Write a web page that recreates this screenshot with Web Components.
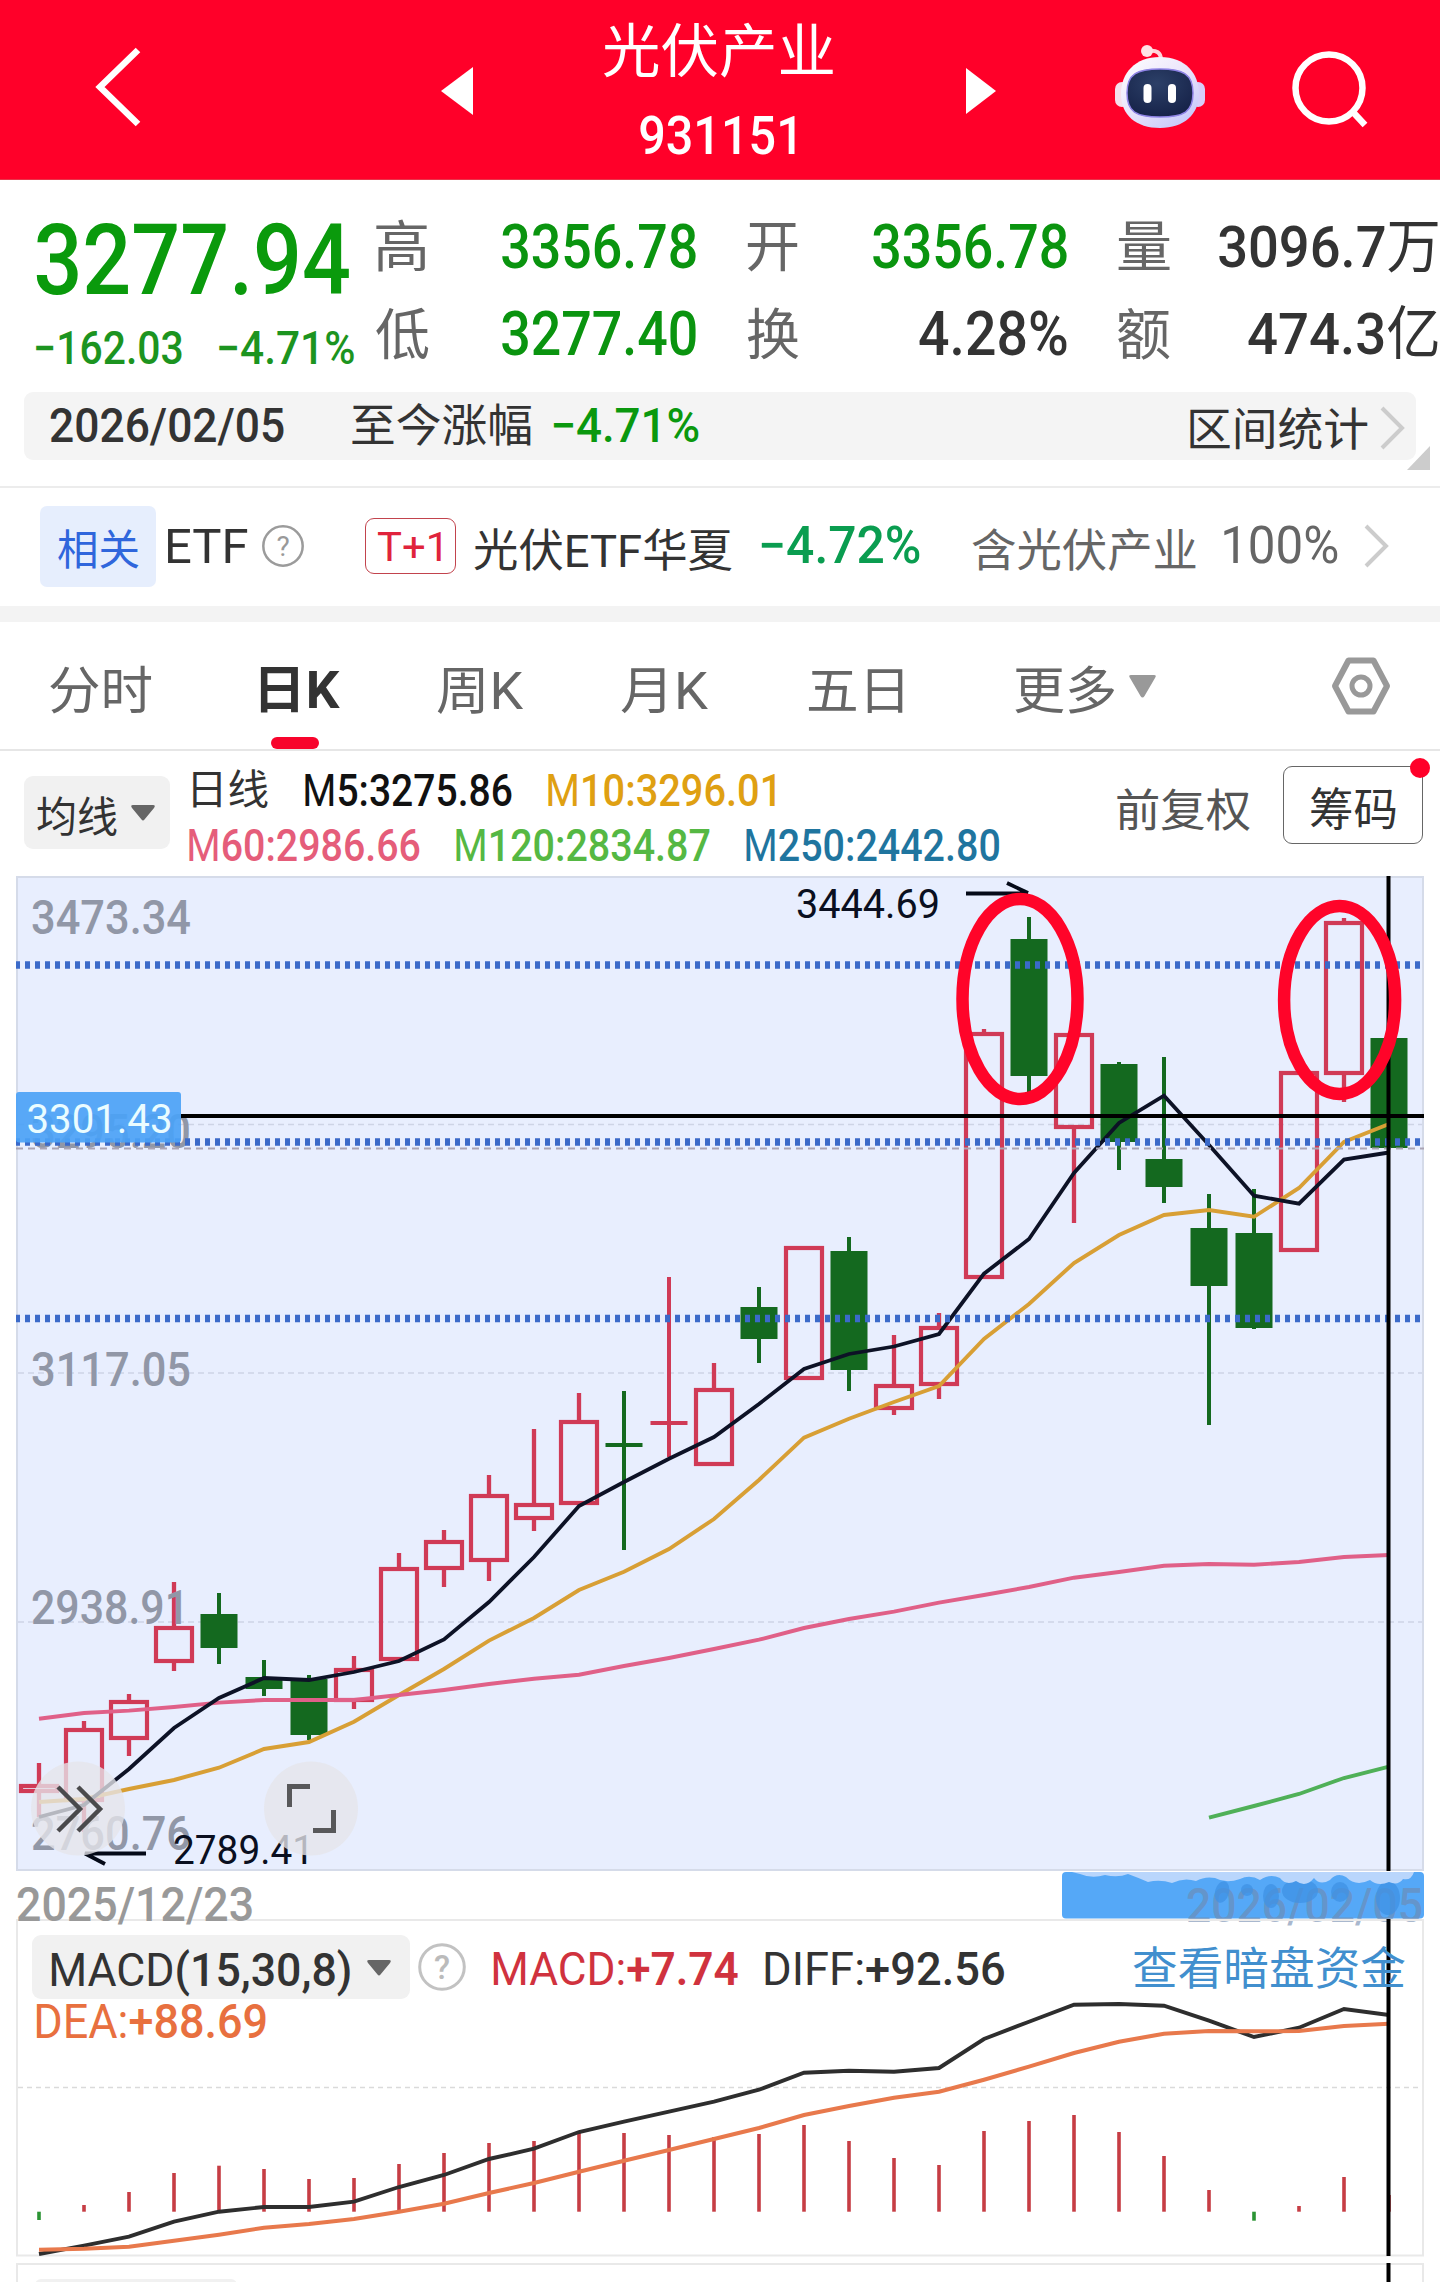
<!DOCTYPE html>
<html lang="zh-CN">
<head>
<meta charset="utf-8">
<title>光伏产业 931151</title>
<style>
html,body{margin:0;padding:0;background:#fff}
body{width:1440px;height:2282px;overflow:hidden;font-family:Roboto,"Noto Sans CJK SC",sans-serif;color:#333}
</style>
</head>
<body>
<stock-page></stock-page>
<script>
const STACK = 'Roboto, "Noto Sans CJK SC", sans-serif';

function define(name, css, html) {
  customElements.define(name, class extends HTMLElement {
    connectedCallback() {
      if (this.shadowRoot) return;
      const root = this.attachShadow({ mode: 'open' });
      root.innerHTML = `<style>${css}</style>${typeof html === 'function' ? html(this) : html}`;
    }
  });
}

/* A single line of text condensed to a given ink width.
   w: ink width, s: font size, wt: weight, g: gap before, y: centre inside the row. <b> marks heavier digits. */
customElements.define('fit-text', class extends HTMLElement {
  connectedCallback() {
    if (this.shadowRoot) return;
    const n = (k, d) => this.hasAttribute(k) ? +this.getAttribute(k) : d;
    const w = n('w', 100), s = n('s', 45), wt = n('wt', 400), bw = n('bw', 500), g = n('g', 0), y = n('y', s / 2);
    const ctx = document.createElement('canvas').getContext('2d');
    let adv = 0, left = 0, right = 0, i = 0;
    for (const node of this.childNodes) {
      ctx.font = `${node.nodeType === 1 ? bw : wt} ${s}px ${STACK}`;
      const m = ctx.measureText(node.textContent);
      if (i++ === 0) left = m.actualBoundingBoxLeft;
      right = adv + m.actualBoundingBoxRight;
      adv += m.width;
    }
    const k = w / (left + right);
    this.attachShadow({ mode: 'open' }).innerHTML = `<style>
      :host{display:block;flex:none;width:${w}px;height:${s}px;margin-left:${g}px;margin-top:${y - s / 2}px;
        font:${wt} ${s}px/${s}px ${STACK};white-space:nowrap;color:${this.getAttribute('c') || 'inherit'}}
      span{display:inline-block;transform-origin:0 0;transform:translateX(${left * k}px) scaleX(${k})}
      ::slotted(b){font-weight:${bw}}
    </style><span><slot></slot></span>`;
  }
});

const ICONS = {
  back: [44, 80, '<path d="M42 3 4 40 42 77" fill="none" stroke="#fff" stroke-width="6.500"/>'],
  prev: [32, 48, '<path d="M0 24 32 0V48Z" fill="#fff"/>'],
  next: [30, 46, '<path d="M30 23 0 0V46Z" fill="#fff"/>'],
  robot: [92, 86, `<defs><linearGradient id="h" x1="0" y1="0" x2=".8" y2="1"><stop offset="0" stop-color="#fff"/><stop offset=".55" stop-color="#e9e3fb"/><stop offset="1" stop-color="#c5c8fa"/></linearGradient>
    <radialGradient id="f" cx=".45" cy=".3" r=".8"><stop offset="0" stop-color="#2c4068"/><stop offset="1" stop-color="#141f45"/></radialGradient></defs>
    <path d="M34 8Q47 6 47 17" fill="none" stroke="#ffd5dc" stroke-width="4"/><circle cx="33" cy="8" r="6" fill="#ffe3e6"/>
    <rect x="1" y="39" width="14" height="25" rx="7" fill="#f5dfec"/><rect x="77" y="39" width="14" height="25" rx="7" fill="#d8cefa"/>
    <path d="M46 14C72 14 85 31 85 51S70 85 46 85 7 72 7 51 21 14 46 14Z" fill="url(#h)"/>
    <path d="M46 26C69 26 79 31 79 50S70 74 46 74 13 69 13 50 23 26 46 26Z" fill="url(#f)" stroke="#8f83e6" stroke-width="1.500"/>
    <rect x="29.500" y="41" width="8" height="19" rx="4" fill="#fff"/><rect x="54" y="41" width="8" height="19" rx="4" fill="#fff"/>`],
  search: [76, 78, '<g fill="none" stroke="#fff" stroke-width="6.500"><ellipse cx="37" cy="38" rx="33.500" ry="33.500"/><path d="M60 61 73 75"/></g>'],
  chev: [26, 44, '<path d="M2 2 22 22 2 42" fill="none" stroke="#ccc" stroke-width="4"/>'],
  help: [44, 44, '<circle cx="22" cy="22" r="19.700" fill="none" stroke="#9b9b9b" stroke-width="2.500"/><text x="22" y="32" text-anchor="middle" font-size="28" fill="#999">?</text>'],
  help2: [50, 50, '<circle cx="25" cy="25" r="22.300" fill="none" stroke="#c2c2c2" stroke-width="3"/><text x="25" y="36.500" text-anchor="middle" font-size="33" font-weight="500" fill="#bbb">?</text>'],
  hex: [60, 60, '<path d="M17.500 4.500H42.500L56 30 42.500 55.500H17.500L4 30Z" fill="none" stroke="#999" stroke-width="6" stroke-linejoin="round"/><circle cx="30" cy="30" r="9" fill="none" stroke="#999" stroke-width="5"/>'],
  more: [27, 23, '<path d="M2 0H25Q28 0 26 3L15.500 21Q13.500 24 11.500 21L1 3Q-1 0 2 0Z" fill="#999"/>'],
  caret: [24, 16, '<path d="M2 0H22Q25 0 23 3L13.500 14.500Q12 16.500 10.500 14.500L1 3Q-1 0 2 0Z" fill="#666"/>'],
  corner: [23, 24, '<path d="M23 0V24H0Z" fill="#ccc"/>']
};
customElements.define('app-icon', class extends HTMLElement {
  connectedCallback() {
    if (this.shadowRoot) return;
    const [w, h, body] = ICONS[this.getAttribute('name')];
    const g = +this.getAttribute('g') || 0, y = +this.getAttribute('y') || h / 2;
    this.attachShadow({ mode: 'open' }).innerHTML = `<style>:host{display:block;flex:none;width:${w}px;height:${h}px;margin-left:${g}px;margin-top:${y - h / 2}px}
      svg{display:block;overflow:visible;font-family:${STACK}}</style><svg width="${w}" height="${h}" viewBox="0 0 ${w} ${h}">${body}</svg>`;
  }
});

define('title-bar', `
  :host{display:flex;align-items:flex-start;height:179px;background:#ff0029;color:#fff;border-bottom:1px solid #e8354a;box-sizing:content-box}
  .t{display:flex;flex-direction:column;width:230px;margin-left:130px}
`, `<app-icon name="back" g="96" y="87"></app-icon>
  <app-icon name="prev" g="301" y="90.5"></app-icon>
  <div class="t"><fit-text w="230" s="58" y="52">光伏产业</fit-text><fit-text w="155" s="54" wt="500" g="37" y="55">931151</fit-text></div>
  <app-icon name="next" g="133" y="90.5"></app-icon>
  <app-icon name="robot" g="118" y="86"></app-icon>
  <app-icon name="search" g="86" y="89"></app-icon>`);

define('stat-pair', `
  :host{display:flex;justify-content:space-between;align-items:flex-start;height:87px;color:#333}
`, '<slot></slot>');

define('quote-panel', `
  :host{display:flex;height:212px}
  .main{width:376px;flex:none;color:#0a9a0c}
  .row{display:flex;align-items:flex-start}
  .col{width:320px;flex:none;padding-top:22px}
  .col+.col{margin-left:51px}
`, `<div class="main"><fit-text w="313" s="99" wt="500" g="36" y="80">3277.94</fit-text>
    <div class="row"><fit-text w="146" s="45.5" wt="500" g="36" y="39" c="#1c9420">−162.03</fit-text><fit-text w="135" s="45.5" wt="500" g="37" y="39" c="#1c9420">−4.71%</fit-text></div></div>
  <div class="col">
    <stat-pair><fit-text w="51" s="55" y="45" c="#666">高</fit-text><fit-text w="194" s="61" wt="500" y="45" c="#0a940f">3356.78</fit-text></stat-pair>
    <stat-pair><fit-text w="53" s="55" y="46" c="#666">低</fit-text><fit-text w="194" s="61" wt="500" y="45" c="#0a940f">3277.40</fit-text></stat-pair></div>
  <div class="col">
    <stat-pair><fit-text w="51" s="55" y="45" c="#666">开</fit-text><fit-text w="194" s="61" wt="500" y="45" c="#0a940f">3356.78</fit-text></stat-pair>
    <stat-pair><fit-text w="52" s="55" y="46" c="#666">换</fit-text><fit-text w="148" s="61" wt="500" y="45">4.28%</fit-text></stat-pair></div>
  <div class="col">
    <stat-pair><fit-text w="52" s="55" y="45" c="#666">量</fit-text><fit-text w="219" s="58" wt="400" bw="500" y="45"><b>3096.7</b>万</fit-text></stat-pair>
    <stat-pair><fit-text w="52" s="55" y="46" c="#666">额</fit-text><fit-text w="190" s="58" wt="400" bw="500" y="45"><b>474.3</b>亿</fit-text></stat-pair></div>`);

define('range-bar', `
  :host{display:block;height:94px;border-bottom:2px solid #ececec;box-sizing:content-box}
  .wrap{display:flex;align-items:flex-start}
  .bar{display:flex;align-items:flex-start;width:1392px;height:68px;margin-left:24px;background:#f4f4f4;border-radius:9px}
`, `<div class="wrap"><div class="bar"><fit-text w="234" s="48" wt="500" g="26" y="34">2026/02/05</fit-text>
  <fit-text w="179" s="45" g="68" y="34">至今涨幅</fit-text><fit-text w="146" s="48" wt="500" g="22" y="34" c="#0a980e">−4.71%</fit-text>
  <fit-text w="178" s="45" g="491" y="38">区间统计</fit-text><app-icon name="chev" g="12" y="36"></app-icon></div><app-icon name="corner" g="-9" y="66"></app-icon></div>`);

define('etf-row', `
  :host{display:flex;align-items:flex-start;height:118px;border-bottom:16px solid #f3f3f3;box-sizing:content-box}
  .chip{display:flex;align-items:flex-start;width:116px;height:81px;margin:18px 0 0 40px;background:#e6eefd;border-radius:7px}
  .tag{display:flex;align-items:flex-start;box-sizing:border-box;width:91px;height:56px;margin:30px 0 0 60px;border:1.500px solid #c2434d;border-radius:9px}
`, `<div class="chip"><fit-text w="81" s="42" g="18" y="45" c="#2f66dc">相关</fit-text></div>
  <fit-text w="81" s="48" g="11" y="59">ETF</fit-text><app-icon name="help" g="13" y="58"></app-icon>
  <div class="tag"><fit-text w="63" s="41" g="12" y="28" c="#e0233c">T+1</fit-text></div>
  <fit-text w="258" s="45" g="18" y="63">光伏ETF华夏</fit-text>
  <fit-text w="159" s="51" wt="500" g="29" y="57" c="#0a9d50">−4.72%</fit-text>
  <fit-text w="224" s="45" g="52" y="63" c="#666">含光伏产业</fit-text>
  <fit-text w="114" s="51" g="28" y="57" c="#666">100%</fit-text>
  <app-icon name="chev" g="26" y="58"></app-icon>`);

define('period-tabs', `
  :host{display:flex;align-items:flex-start;height:127px;color:#666;border-bottom:2px solid #e6e6e6;box-sizing:content-box}
  .on{display:flex;flex-direction:column;width:80px;height:127px;margin-left:108px;color:#333}
  .on i{width:48px;height:12px;border-radius:6px;background:#f8042c;margin:21px 0 0 11px}
`, `<fit-text w="102" s="51" g="50" y="69">分时</fit-text>
  <div class="on"><fit-text w="80" s="51" wt="700" y="68">日K</fit-text><i></i></div>
  <fit-text w="86" s="51" g="97" y="69">周K</fit-text><fit-text w="87" s="51" g="98" y="69">月K</fit-text>
  <fit-text w="95" s="51" g="100" y="69">五日</fit-text><fit-text w="100" s="51" g="112" y="69">更多</fit-text>
  <app-icon name="more" g="14" y="64"></app-icon><app-icon name="hex" g="175" y="64"></app-icon>`);

define('ma-legend', `
  :host{display:flex;align-items:flex-start;height:125px}
  .row{display:flex;align-items:flex-start;height:56px}
  .btn{display:flex;align-items:flex-start;width:146px;height:73px;margin:25px 0 0 24px;background:#f1f1f1;border-radius:9px}
  .ma{width:830px;flex:none;margin-left:19px}
  .box{display:flex;align-items:flex-start;position:relative;box-sizing:border-box;width:140px;height:78px;margin:15px 0 0 33px;border:1.500px solid #666;border-radius:9px}
  .box i{position:absolute;right:-8px;top:-9px;width:20px;height:20px;border-radius:50%;background:#ff0029}
`, `<div class="btn"><fit-text w="80" s="42" g="13" y="42">均线</fit-text><app-icon name="caret" g="14" y="37"></app-icon></div>
  <div class="ma"><div class="row"><fit-text w="75" s="41" g="4" y="39">日线</fit-text><fit-text w="207" s="44" g="37" y="40" c="#111">M<b>5:3275.86</b></fit-text><fit-text w="227" s="44" g="36" y="40" c="#dfa012">M<b>10:3296.01</b></fit-text></div>
  <div class="row"><fit-text w="231" s="44" g="0" y="39" c="#e55d7a">M<b>60:2986.66</b></fit-text><fit-text w="254" s="44" g="36" y="39" c="#55b843">M<b>120:2834.87</b></fit-text><fit-text w="253" s="44" g="36" y="39" c="#1f759f">M<b>250:2442.80</b></fit-text></div></div>
  <fit-text w="133" s="45" g="98" y="60" c="#555">前复权</fit-text>
  <div class="box"><fit-text w="86" s="45" g="26" y="43">筹码</fit-text><i></i></div>`);

const X = i => 39 + 45 * i;
const poly = (ys, from, color, width) => `<polyline fill="none" stroke="${color}" stroke-width="${width}" points="${ys.map((y, i) => X(i + from) + ',' + y).join(' ')}"/>`;
const label = (x, y, size, w, t, fill, wt = 400) => `<text x="${x}" y="${y}" font-size="${size}" font-weight="${wt}" fill="${fill}" textLength="${w}" lengthAdjust="spacingAndGlyphs">${t}</text>`;

/* direction, high, body top, body bottom, low */
const CANDLES = [
  'r 1763 1784 1793 1817','r 1721 1728 1802 1832','r 1694 1700 1740 1756','r 1582 1626 1663 1671','g 1593 1614 1648 1664',
  'g 1660 1677 1689 1696','g 1675 1679 1735 1740','r 1656 1668 1702 1709','r 1553 1567 1661 1661','r 1530 1540 1570 1587',
  'r 1475 1494 1562 1581','r 1429 1503 1520 1531','r 1393 1420 1505 1505','g 1391 1443 1447 1550','r 1277 1421 1425 1457',
  'r 1363 1388 1466 1466','g 1287 1307 1339 1363','r 1247 1246 1380 1380','g 1237 1251 1370 1391','r 1335 1384 1410 1415',
  'r 1313 1326 1386 1399','r 1029 1032 1279 1279','g 917 939 1076 1092','r 1033 1033 1129 1223','g 1062 1064 1142 1170',
  'g 1057 1159 1187 1203','g 1194 1228 1286 1425','g 1189 1233 1328 1329','r 1071 1071 1252 1252','r 918 921 1075 1102','g 1038 1038 1148 1148'
].map(s => s.split(' ').map((v, k) => k ? +v : v));
const MA5 = [1817,1805,1769,1728,1698,1678,1680,1672,1661,1639.5,1602,1557,1506,1482,1458.7,1437,1404,1369,1354,1346.5,1334,1273.7,1239,1173,1123,1095.7,1145,1195.7,1203.6,1159.6,1152.5];
const MA10 = [1802,1799,1789,1780,1767.7,1749,1742,1721.7,1695,1669,1640.6,1618,1590,1571.7,1549,1519,1480,1437.7,1418.7,1402,1386,1339,1304,1263,1235,1215,1210,1216.8,1188,1142,1124];
const MA60 = [1718.7,1713,1710.6,1707,1702.6,1700,1700,1700,1695,1690,1684,1678.7,1674.7,1666,1658,1649,1639.7,1628,1619,1611.7,1602.7,1595,1587,1577.7,1572,1565.7,1564,1564.7,1562,1557,1555];
const MA120 = [1817.7,1806,1794,1778,1766.7];

define('k-chart', `:host{display:block;height:995px;margin-left:16px}svg{display:block;font-family:${STACK}}`, () => {
  const candles = CANDLES.map(([d, h, t, b, l], i) => {
    const x = X(i), c = d === 'r' ? '#d03a56' : '#14691f', flat = b - t < 5;
    if (flat) return `<path d="M${x} ${h}V${l}M${x - 18.5} ${(t + b) / 2}H${x + 18.5}" stroke="${c}" stroke-width="4"/>`;
    if (d === 'g') return `<path d="M${x} ${h}V${l}" stroke="${c}" stroke-width="4"/><rect x="${x - 18.5}" y="${t}" width="37" height="${b - t}" fill="${c}"/>`;
    return `<path d="M${x} ${h}V${t + 2}M${x} ${b - 2}V${Math.max(l, b - 2)}" stroke="${c}" stroke-width="4.300"/><rect x="${x - 18}" y="${t + 2}" width="36" height="${b - t - 4}" fill="none" stroke="${c}" stroke-width="4.200"/>`;
  }).join('');
  const dots = y => `<path d="M15 ${y}H1424" stroke="#3b6ac9" stroke-width="7.500" stroke-dasharray="5 5"/>`;
  const grid = y => `<path d="M18 ${y}H1422" stroke="#cdd4e6" stroke-width="1.500" stroke-dasharray="6 4"/>`;
  return `<svg width="1408" height="995" viewBox="16 876 1408 995">
    <rect x="17" y="877" width="1406" height="993" fill="#e8eefe" stroke="#d5dbe9" stroke-width="2"/>
    ${grid(1124.5)}${grid(1373)}${grid(1622)}
    ${candles}
    ${label(31, 934, 48, 160, '3473.34', '#9197a7', 500)}${label(31, 1148, 48, 160, '3295.20', '#9197a7', 500)}
    ${label(31, 1385.5, 48, 160, '3117.05', '#9197a7', 500)}${label(31, 1624, 48, 158, '2938.91', '#9197a7', 500)}${label(31, 1850, 48, 160, '2760.76', '#9197a7', 500)}
    ${poly(MA10, 0, '#d89f35', 3.9)}${poly(MA60, 0, '#e06088', 3.9)}${poly(MA5, 0, '#0d1226', 3.8)}${poly(MA120, 26, '#4fb058', 3.9)}
    ${label(796, 917.5, 40, 144, '3444.69', '#0a0f20')}<path d="M966 893.500H1028M1007 883 1028 893" stroke="#050a18" stroke-width="3.800" fill="none"/>
    ${label(173, 1863.5, 40, 141, '2789.41', '#0a0f20')}<path d="M146 1853.500H85L105 1864" stroke="#050a18" stroke-width="3.800" fill="none"/>
    <path d="M16 1148.500H1424" stroke="#aaa4b4" stroke-width="2" stroke-dasharray="7 5"/>
    <path d="M181 1116H1424" stroke="#000" stroke-width="4"/>
    ${dots(965)}${dots(1142)}${dots(1318.5)}
    <path d="M1388.500 876V1871" stroke="#000" stroke-width="4"/>
    <rect x="16" y="1092" width="165" height="50.500" rx="3" fill="#4ba2f6" fill-opacity=".92"/>
    ${label(26.5, 1132.5, 41, 146, '3301.43', '#eafcff')}
    <g fill="none" stroke="#ff0429" stroke-width="12.500"><ellipse cx="1020" cy="999" rx="57.500" ry="100"/><ellipse cx="1339.600" cy="1000" rx="55.500" ry="94"/></g>
    <g fill="#e6e6ea" fill-opacity=".78"><circle cx="78" cy="1808.500" r="47"/><circle cx="311" cy="1808.500" r="47"/></g>
    <g fill="none" stroke="#4a4a4c" stroke-width="4.500"><path d="M58 1787 80 1809 58 1831M78 1787 100 1809 78 1831"/><path d="M289.500 1807V1786.500H310M333.500 1810V1830.500H313" stroke-width="5" stroke="#58585a"/></g>
  </svg>`;
});

define('date-row', `
  :host{display:flex;justify-content:space-between;align-items:flex-start;height:48px;padding:0 16px;box-sizing:border-box}
  svg{display:block;overflow:visible;font-family:${STACK}}
  fit-text{position:relative;z-index:1}
`, `<fit-text w="235" s="48" wt="500" g="1" y="33.5" c="#999">2025/12/23</fit-text>
  <svg width="362" height="48" viewBox="1062 1871 362 48">
    <rect x="1062" y="1872" width="362" height="46.500" rx="4" fill="#55a8f7"/>
    <text x="1186" y="1921.500" font-size="48" font-weight="500" fill="#6f88ad" fill-opacity=".6" textLength="237" lengthAdjust="spacingAndGlyphs">2026/02/05</text>
    <g fill="#3f92e4" fill-opacity=".75"><ellipse cx="1222" cy="1892" rx="7" ry="11" transform="rotate(15 1222 1892)"/><circle cx="1247" cy="1890" r="6"/><ellipse cx="1271" cy="1896" rx="8" ry="12"/><ellipse cx="1300" cy="1891" rx="18" ry="12"/><ellipse cx="1340" cy="1892" rx="9" ry="10"/><ellipse cx="1388" cy="1898" rx="12" ry="17"/></g>
    <path d="M1072 1872H1414Q1411 1881 1403 1879 1398 1886 1389 1882 1378 1887 1370 1880 1356 1887 1346 1877 1337 1872 1330 1880 1320 1886 1314 1878 1306 1888 1296 1881 1286 1886 1280 1878 1270 1873 1260 1880 1250 1874 1240 1879 1226 1884 1215 1878 1205 1876 1196 1881 1184 1877 1172 1883 1160 1879 1148 1882 1139 1878 1128 1874 1118 1878 1105 1875 1092 1879 1080 1874 1074 1879Z" fill="#b9d6fc"/>
  </svg>`);

const HIST = [2220,2205,2192,2173,2165.7,2169,2179,2178,2164,2153,2143,2141,2132,2133,2135,2137,2134,2125,2141,2158,2165,2131,2121,2115,2132,2156,2190,2220.7,2206,2177,2195];
const DIFF = [2254,2245.7,2236.7,2221.7,2211.7,2207,2207,2201.7,2187,2175,2159,2148.7,2132,2121.7,2111.7,2101.7,2089.7,2072.7,2070.7,2071.7,2068,2039,2021.7,2004.7,2004,2005.7,2020.7,2037,2027.7,2009,2015];
const DEA = [2249.7,2248.7,2246.7,2240.7,2234.7,2227.7,2224,2219,2211.7,2203.7,2193,2183,2171.7,2160.7,2150,2139,2128,2115,2106,2097.7,2091.7,2079.7,2066.7,2053,2041.7,2033.7,2031,2031.3,2031,2026,2023.7];

define('macd-panel', `
  :host{display:grid;height:338px;margin:0 16px}
  :host>*{grid-area:1/1}
  svg{display:block;pointer-events:none}
  .row{display:flex;align-items:flex-start}
  .btn{display:flex;align-items:flex-start;width:378px;height:64px;margin:16px 0 0 16px;background:#f1f1f1;border-radius:9px}
`, () => `<div><div class="row">
    <div class="btn"><fit-text w="299" s="47" g="19" y="34.5">MACD<b>(15,30,8)</b></fit-text><app-icon name="caret" g="17" y="32.5"></app-icon></div>
    <app-icon name="help2" g="7" y="48"></app-icon>
    <fit-text w="245" s="47" g="26" y="49.5" c="#d0323e" bw="600">MACD:<b>+7.74</b></fit-text>
    <fit-text w="239" s="47" g="27" y="49.5">DIFF:<b>+92.56</b></fit-text>
    <fit-text w="272" s="45" g="129" y="50" c="#418fce">查看暗盘资金</fit-text></div>
    <fit-text w="230" s="48" g="20" y="23" c="#e8703f">DEA:<b>+88.69</b></fit-text></div>
  <svg width="1408" height="338" viewBox="16 1919 1408 338">
    <rect x="17" y="1920" width="1406" height="335.500" fill="none" stroke="#e9e9e9" stroke-width="2"/>
    <path d="M18 2087.500H1422" stroke="#dadada" stroke-width="1.500" stroke-dasharray="5 4"/>
    ${HIST.map((y, i) => `<path d="M${X(i)} 2211.700V${y}" stroke="${y > 2212 ? '#2b9434' : '#c63d44'}" stroke-width="3.600"/>`).join('')}
    ${poly(DIFF, 0, '#2e2e2e', 3.9)}${poly(DEA, 0, '#e8794c', 4)}
    <path d="M1388.500 1919V2256" stroke="#000" stroke-width="4"/>
  </svg>`);

define('next-panel', `:host{display:block;height:19px;margin:6px 16px 0}svg{display:block}`,
  `<svg width="1408" height="19" viewBox="16 2263 1408 19"><path d="M17 2282V2264H1423V2282" fill="none" stroke="#e9e9e9" stroke-width="2"/><rect x="35" y="2279" width="202" height="20" rx="6" fill="#f1f1f1"/><path d="M1388.500 2263V2282" stroke="#000" stroke-width="4"/></svg>`);

define('stock-page', `:host{display:flex;flex-direction:column;width:1440px;height:2282px;background:#fff;overflow:hidden}:host>*{flex:none}`,
  '<title-bar></title-bar><quote-panel></quote-panel><range-bar></range-bar><etf-row></etf-row><period-tabs></period-tabs><ma-legend></ma-legend><k-chart></k-chart><date-row></date-row><macd-panel></macd-panel><next-panel></next-panel>');
</script>
</body>
</html>
